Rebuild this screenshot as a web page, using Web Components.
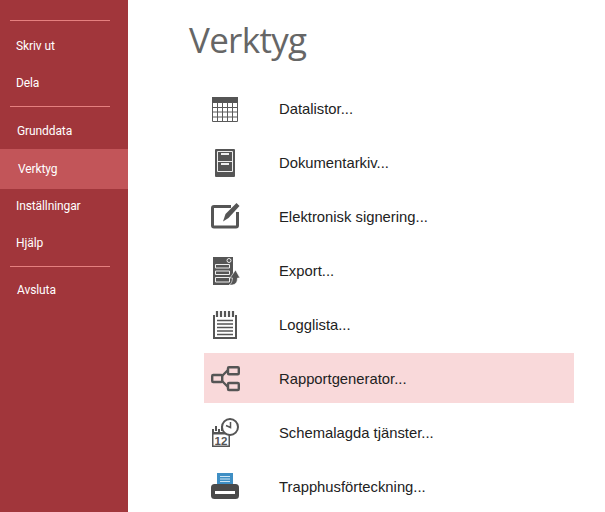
<!DOCTYPE html>
<html lang="sv">
<head>
<meta charset="utf-8">
<title>Verktyg</title>
<style>
    html, body { margin: 0; height: 100%; overflow: hidden; background: #fff; }
    body { display: flex; height: 512px; }
</style>
</head>
<body>
<side-bar>
    <side-rule></side-rule>
    <side-item h="37" x="16" style="margin-top:6px">Skriv ut</side-item>
    <side-item h="37" x="16">Dela</side-item>
    <side-rule style="margin-top:5px"></side-rule>
    <side-item h="37" x="17" style="margin-top:5px">Grunddata</side-item>
    <side-item h="40" x="18" active>Verktyg</side-item>
    <side-item h="33" x="16">Inställningar</side-item>
    <side-item h="37" x="16" style="margin-top:2px">Hjälp</side-item>
    <side-rule style="margin-top:5px"></side-rule>
    <side-item h="37" x="17" style="margin-top:4px">Avsluta</side-item>
</side-bar>
<main-pane heading="Verktyg">
    <tool-row label="Datalistor...">
        <svg viewBox="0 0 30 30" width="30" height="30" fill="none" stroke="#5a5a5a" stroke-width="1">
            <rect x="2" y="3" width="26" height="6" fill="#555" stroke="none"/>
            <path d="M2.500 8v19.500h25V8M2.500 13.500h25M2.500 18h25M2.500 23h25M7.500 8v19M12.500 8v19M17.500 8v19M22.500 8v19"/>
        </svg>
    </tool-row>
    <tool-row label="Dokumentarkiv...">
        <svg viewBox="0 0 30 30" width="30" height="30">
            <rect x="5" y="1" width="20" height="28" rx="1" fill="#555"/>
            <path d="M7.500 3.500h15v20h-15zM7.500 13.500h15" fill="none" stroke="#eee"/>
            <path d="M11 5h8v2h-8zM11 15h8v2h-8z" fill="#eee"/>
        </svg>
    </tool-row>
    <tool-row label="Elektronisk signering...">
        <svg viewBox="0 0 30 30" width="30" height="30">
            <path d="M21 4.500H4q-1.500 0-1.500 1.500v17.500q0 1.500 1.500 1.500h22q1.500 0 1.500-1.500V10" fill="none" stroke="#555" stroke-width="3"/>
            <path d="M13 19.500l2.500-7.500L26.500 1 29.500 4 18.500 16z" fill="#555"/>
        </svg>
    </tool-row>
    <tool-row label="Export...">
        <svg viewBox="0 0 30 30" width="30" height="30">
            <rect x="3" y="1" width="20" height="28" fill="#555"/>
            <circle cx="19" cy="4.500" r="2" fill="none" stroke="#eee"/>
            <path d="M5.500 8.500h14v3.500h-14zM5.500 15h14v3.500h-14zM5.500 21.500h14V26h-14z" fill="none" stroke="#eee"/>
            <path d="M19 29q3-1 3.500-7H20l5.500-8 4.500 8h-2.500q0 7-6 7z" fill="#555" stroke="#fff" stroke-width=".6"/>
        </svg>
    </tool-row>
    <tool-row label="Logglista...">
        <svg viewBox="0 0 30 30" width="30" height="30">
            <path d="M4 5H4V28H26V5" fill="none" stroke="#555" stroke-width="2"/>
            <path d="M7 1v6M11 1v6M15 1v6M19 1v6M23 1v6" stroke="#555" stroke-width="2.200"/>
            <path d="M7 10.500h16M7 14h16M7 17.500h16M7 21h16M7 24.500h16" stroke="#555" stroke-width="1.500"/>
        </svg>
    </tool-row>
    <tool-row label="Rapportgenerator..." active>
        <svg viewBox="0 0 30 30" width="30" height="30" fill="none" stroke="#555" stroke-width="2.400">
            <rect x="2.200" y="11" width="10" height="7" rx="1"/>
            <rect x="18" y="3.200" width="10.800" height="7" rx="1"/>
            <rect x="18" y="19" width="10.800" height="7" rx="1"/>
            <path d="M12 12l6-6M12 17l6 6"/>
        </svg>
    </tool-row>
    <tool-row label="Schemalagda tjänster...">
        <svg viewBox="0 0 30 30" width="30" height="30">
            <path d="M2 11h18v18H2z" fill="#555"/>
            <rect x="4.500" y="7.500" width="3" height="6" fill="#555" stroke="#fff"/>
            <rect x="10.500" y="7.500" width="3" height="6" fill="#555" stroke="#fff"/>
            <rect x="3.500" y="16.500" width="15" height="11" fill="#fff"/>
            <text x="11" y="26.500" font-family="Liberation Sans, sans-serif" font-size="11.500" font-weight="700" fill="#555" text-anchor="middle">12</text>
            <circle cx="20" cy="9" r="8" fill="#fff" stroke="#555" stroke-width="2"/>
            <path d="M20.500 4v5.500l-4.500-2" fill="none" stroke="#555" stroke-width="1.500"/>
        </svg>
    </tool-row>
    <tool-row label="Trapphusförteckning...">
        <svg viewBox="0 0 30 30" width="30" height="30">
            <rect x="7" y="1" width="16" height="13" fill="#3f8fc4"/>
            <path d="M10 4.500h10M10 7h10M10 9.500h10" stroke="#cfe6f5" stroke-width="1"/>
            <rect x="1" y="12" width="28" height="15" rx="3.500" fill="#4a4a4a"/>
            <rect x="5" y="19" width="20" height="3" fill="#fff"/>
        </svg>
    </tool-row>
</main-pane>

<script>
// Left menu column.
class SideBar extends HTMLElement {
    constructor() {
        super();
        this.attachShadow({ mode: 'open' }).innerHTML = `
            <style>
                :host {
                    display: flex;
                    flex-direction: column;
                    flex: none;
                    box-sizing: border-box;
                    width: 128px;
                    height: 512px;
                    padding-top: 20px;
                    background: #a1363b;
                    color: #fff;
                }
            </style>
            <slot></slot>`;
    }
}

class SideRule extends HTMLElement {
    constructor() {
        super();
        this.attachShadow({ mode: 'open' }).innerHTML = `
            <style>
                :host { display: block; height: 1px; margin: 0 18px 0 10px; background: #e5807f; }
            </style>`;
    }
}

class SideItem extends HTMLElement {
    constructor() {
        super();
        this.attachShadow({ mode: 'open' }).innerHTML = `
            <style>
                :host {
                    display: flex;
                    align-items: center;
                    box-sizing: border-box;
                    font: 12px Roboto, "Liberation Sans", Arial, sans-serif;
                    letter-spacing: -0.1px;
                }
                :host([active]) { background: #c25559; }
            </style>
            <slot></slot>`;
    }
    connectedCallback() {
        this.style.height = this.getAttribute('h') + 'px';
        this.style.paddingLeft = this.getAttribute('x') + 'px';
    }
}

// Right side: heading and list of tools.
class MainPane extends HTMLElement {
    static observedAttributes = ['heading'];
    constructor() {
        super();
        this.attachShadow({ mode: 'open' }).innerHTML = `
            <style>
                :host { display: block; flex: 1; padding-left: 76px; }
                h1 {
                    margin: 0 0 0 -15px;
                    height: 83px;
                    box-sizing: border-box;
                    padding-top: 16px;
                    font: 400 35px/48px "Open Sans", "Liberation Sans", sans-serif;
                    letter-spacing: -0.7px;
                    color: #666;
                }
                div { display: flex; flex-direction: column; gap: 4px; width: 370px; }
            </style>
            <h1></h1>
            <div><slot></slot></div>`;
    }
    attributeChangedCallback(name, oldValue, newValue) {
        this.shadowRoot.querySelector('h1').textContent = newValue;
    }
}

class ToolRow extends HTMLElement {
    static observedAttributes = ['label'];
    constructor() {
        super();
        this.attachShadow({ mode: 'open' }).innerHTML = `
            <style>
                :host {
                    display: flex;
                    align-items: center;
                    box-sizing: border-box;
                    height: 50px;
                    padding-top: 2px;
                    font: 14.800px "Liberation Sans", Arial, sans-serif;
                    color: #222;
                }
                :host([active]) { background: #f9d9da; }
                .icon { display: flex; justify-content: center; width: 42px; margin-right: 33px; }
                span { display: block; }
            </style>
            <div class="icon"><slot></slot></div>
            <span></span>`;
    }
    attributeChangedCallback(name, oldValue, newValue) {
        this.shadowRoot.querySelector('span').textContent = newValue;
    }
}

customElements.define('side-bar', SideBar);
customElements.define('side-rule', SideRule);
customElements.define('side-item', SideItem);
customElements.define('main-pane', MainPane);
customElements.define('tool-row', ToolRow);
</script>
</body>
</html>
